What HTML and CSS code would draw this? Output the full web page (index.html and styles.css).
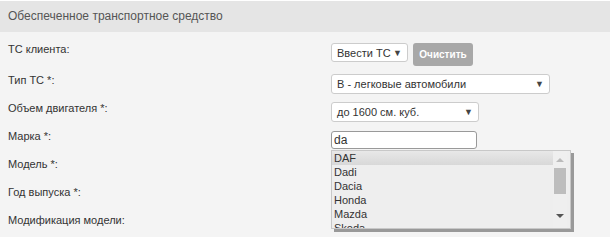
FILE: index.html
```html
<!DOCTYPE html>
<html lang="ru">
<head>
<meta charset="UTF-8" />
<meta name="viewport" content="width=device-width, initial-scale=1.0"/>
<title>Обеспеченное транспортное средство</title>
<link rel="stylesheet" href="styles.css">
</head>
<body>
<div class="panel">
    <div class="panel-head">Обеспеченное транспортное средство</div>
    <div class="panel-body">
        <div class="row row-first">
            <div class="label">ТС клиента:</div>
            <div class="field">
                <div class="select sel-client">Ввести ТС <span class="arrow">▼</span></div>
                <button class="btn-clear">Очистить</button>
            </div>
        </div>
        <div class="row">
            <div class="label">Тип ТС *:</div>
            <div class="field">
                <div class="select sel-type">B - легковые автомобили <span class="arrow">▼</span></div>
            </div>
        </div>
        <div class="row">
            <div class="label">Объем двигателя *:</div>
            <div class="field">
                <div class="select sel-engine">до 1600 см. куб. <span class="arrow">▼</span></div>
            </div>
        </div>
        <div class="row">
            <div class="label">Марка *:</div>
            <div class="field field-brand">
                <input class="input-brand" type="text" value="da">
                <!-- выпадающий список подсказок -->
                <div class="suggest">
                    <ul class="suggest-list">
                        <li class="active">DAF</li>
                        <li>Dadi</li>
                        <li>Dacia</li>
                        <li>Honda</li>
                        <li>Mazda</li>
                        <li>Skoda</li>
                    </ul>
                    <div class="scroll">
                        <span class="scroll-up"></span>
                        <span class="scroll-thumb"></span>
                        <span class="scroll-down"></span>
                    </div>
                </div>
            </div>
        </div>
        <div class="row">
            <div class="label">Модель *:</div>
        </div>
        <div class="row">
            <div class="label">Год выпуска *:</div>
        </div>
        <div class="row row-last">
            <div class="label">Модификация модели:</div>
        </div>
    </div>
</div>
</body>
</html>
```

FILE: styles.css
```css
body {
    margin: 0;
    background: #fff;
    font-family: "Liberation Sans", Arial, sans-serif;
    font-size: 11px;
    color: #333;
}
.panel {
    width: 610px;
}
.panel-head {
    height: 31px;
    margin-top: 1px;
    line-height: 31px;
    padding-left: 8px;
    background: #e5e5e5;
    color: #555;
    font-size: 12px;
}
.panel-body {
    background: #f4f4f4;
    padding-top: 8px;
}
.row {
    display: flex;
    height: 28px;
}
.row-first {
    height: 31px;
}
.row-last {
    height: 26px;
}
.label {
    width: 331px;
    padding-left: 8px;
    padding-top: 1px;
    line-height: 16px;
    box-sizing: border-box;
}
.field {
    display: flex;
    align-items: flex-start;
    padding-top: 3px;
    gap: 5px;
}
.select {
    position: relative;
    height: 19px;
    line-height: 18px;
    box-sizing: border-box;
    padding-left: 5px;
    background: #fff;
    border: 1px solid #ccc;
    border-radius: 3px;
    color: #333;
}
.arrow {
    position: absolute;
    right: 5px;
    top: 0;
    font-size: 9px;
    color: #444;
}
.sel-client {
    width: 77px;
}
.sel-type {
    width: 219px;
    height: 20px;
}
.sel-engine {
    width: 148px;
    height: 20px;
}
.btn-clear {
    height: 23px;
    width: 60px;
    margin: 0;
    padding: 0;
    border: none;
    border-radius: 3px;
    background: #a8a8a8;
    color: #fff;
    font-family: "Liberation Sans", Arial, sans-serif;
    font-weight: bold;
    font-size: 10px;
}
.field-brand {
    position: relative;
    padding-top: 4px;
}
.input-brand {
    width: 146px;
    height: 18px;
    box-sizing: border-box;
    margin: 0;
    padding: 0 2px;
    border: 1px solid #999;
    border-radius: 3px;
    background: #fff;
    font-family: "Liberation Sans", Arial, sans-serif;
    font-size: 12px;
    color: #333;
}
.suggest {
    position: absolute;
    left: 0;
    top: 23px;
    width: 240px;
    height: 79px;
    box-sizing: border-box;
    display: flex;
    background: #eee;
    border: 1px solid #c8c8c8;
    box-shadow: 3px 3px 0 #999;
    overflow: hidden;
    z-index: 2;
}
.suggest-list {
    flex: 1;
    margin: 0;
    padding: 0;
    list-style: none;
    font-size: 11px;
    color: #333;
}
.suggest-list li {
    height: 14px;
    line-height: 14px;
    padding-left: 2px;
}
.suggest-list li.active {
    background: linear-gradient(#e8e8e8, #d8d8d8);
}
.scroll {
    width: 14px;
    margin: 0 3px 0 0;
    position: relative;
    background: #efefef;
}
.scroll-up, .scroll-down {
    position: absolute;
    left: 3px;
    width: 0;
    height: 0;
    border-left: 4px solid transparent;
    border-right: 4px solid transparent;
}
.scroll-up {
    top: 7px;
    border-bottom: 4px solid #bbb;
}
.scroll-down {
    bottom: 10px;
    border-top: 4px solid #555;
}
.scroll-thumb {
    position: absolute;
    left: 1px;
    top: 17px;
    width: 12px;
    height: 26px;
    background: #bdbdbd;
}
```
